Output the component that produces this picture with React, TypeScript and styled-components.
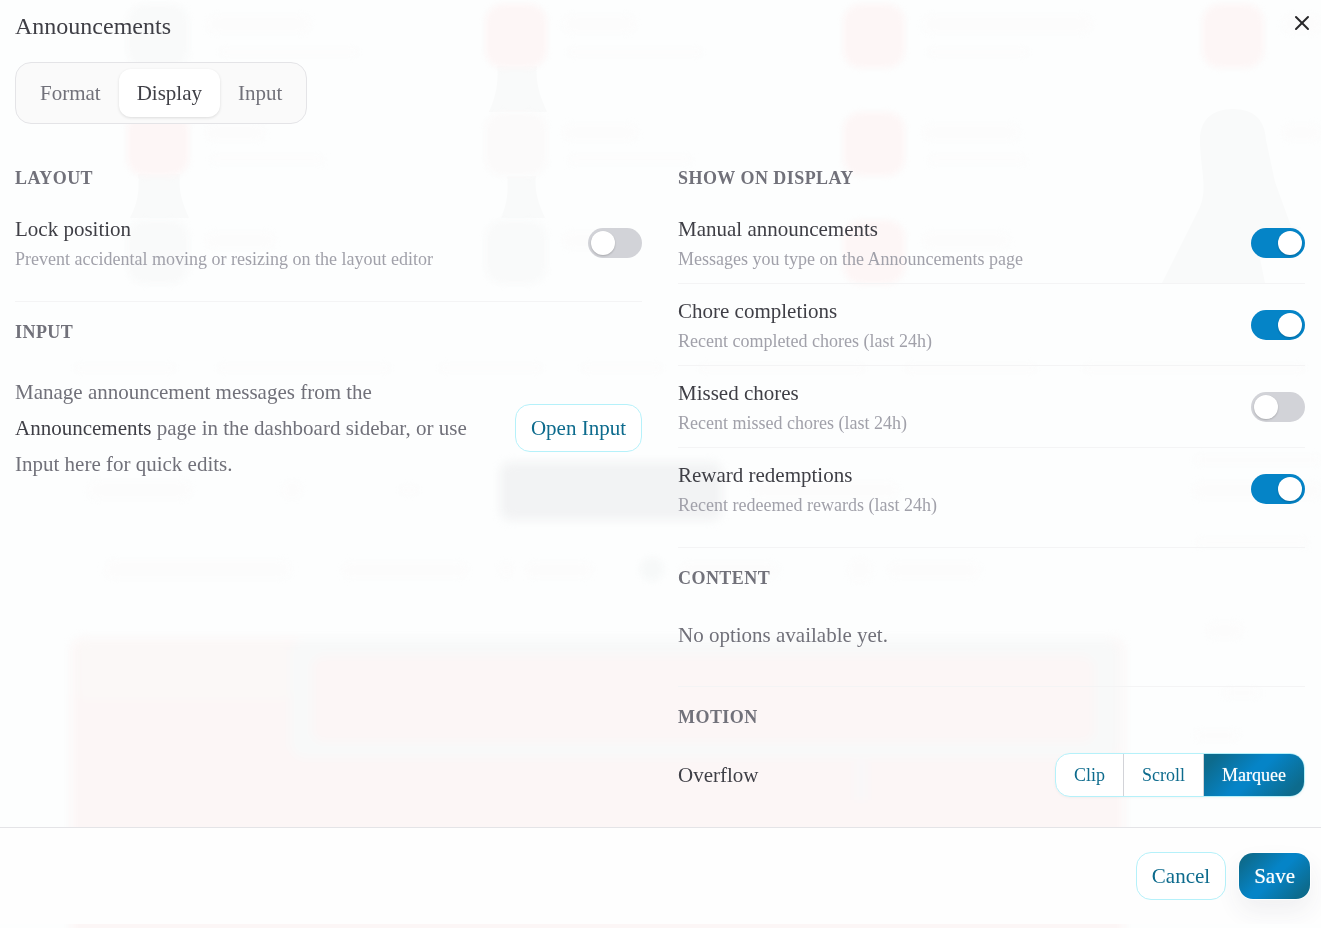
import React, { useState } from "react";
import styled, { createGlobalStyle, css } from "styled-components";
import { X } from "lucide-react";

const color = {
  page: "#fdfefe",
  ink: "#3f3f46",
  muted: "#71717a",
  faint: "#a1a1aa",
  line: "#f4f4f5",
  edge: "#e4e4e7",
  off: "#d2d3d8",
  accent: "#0584c7",
  accentDark: "#0d6b8d",
  accentLine: "#b5f1fa",
};

const accentFill = `linear-gradient(135deg, ${color.accentDark} 10%, ${color.accent} 45%, ${color.accent} 52%, ${color.accentDark} 88%)`;

const GlobalStyle = createGlobalStyle`
  * { box-sizing: border-box; }
  body {
    margin: 0;
    background: ${color.page};
    color: ${color.ink};
    font-family: "Liberation Serif", "Times New Roman", serif;
    font-size: 21px;
    line-height: 32px;
  }
  button, input { font: inherit; margin: 0; }
  h1, h2, p { margin: 0; }
`;

const Dialog = styled.main`
  position: relative;
  z-index: 1;
`;

const Header = styled.header`
  padding: 8px 7px 24px 15px;
`;

const TitleRow = styled.div`
  display: flex;
  justify-content: space-between;
  align-items: flex-start;
  margin-bottom: 18px;
`;

const Title = styled.h1`
  font-size: 24px;
  line-height: 36px;
  font-weight: 400;
`;

const CloseButton = styled.button`
  display: grid;
  place-items: center;
  width: 24px;
  height: 30px;
  padding: 0;
  border: 0;
  background: none;
  color: #27272a;
  cursor: pointer;
`;

const TabList = styled.div`
  display: inline-flex;
  vertical-align: top;
  padding: 6px;
  border: 1px solid ${color.edge};
  border-radius: 16px;
  background: #fafafa;
`;

const Tab = styled.button<{ $active: boolean }>`
  height: 48px;
  padding: 0 18px;
  border: 0;
  border-radius: 12px;
  background: none;
  color: ${color.muted};
  cursor: pointer;
  ${(p) =>
    p.$active &&
    css`
      background: #fff;
      color: ${color.ink};
      box-shadow: 0 1px 3px rgba(0, 0, 0, 0.12);
    `}
`;

const Columns = styled.div`
  display: grid;
  grid-template-columns: repeat(2, minmax(0, 1fr));
  gap: 36px;
  padding: 0 16px 0 15px;
`;

const Section = styled.section`
  padding: 18px 0;
  & + & {
    border-top: 1px solid ${color.line};
  }
`;

const Heading = styled.h2`
  margin-bottom: 12px;
  color: ${color.muted};
  font-size: 18px;
  line-height: 24px;
  font-weight: 700;
  letter-spacing: 0.025em;
  text-transform: uppercase;
`;

const SettingRow = styled.div`
  display: flex;
  justify-content: space-between;
  align-items: center;
  gap: 18px;
  padding: 11px 0 10px;
  & + & {
    border-top: 1px solid ${color.line};
  }
`;

const SettingLabel = styled.label`
  display: block;
`;

const SettingHint = styled.p`
  color: ${color.faint};
  font-size: 18px;
  line-height: 28px;
`;

const Switch = styled.input`
  appearance: none;
  flex: none;
  width: 54px;
  height: 30px;
  padding: 3px;
  border-radius: 15px;
  background: ${color.off};
  cursor: pointer;
  &::before {
    content: "";
    display: block;
    width: 24px;
    height: 24px;
    border-radius: 50%;
    background: #fff;
    box-shadow: 0 1px 2px rgba(0, 0, 0, 0.2);
  }
  &:checked {
    background: ${color.accent};
  }
  &:checked::before {
    margin-left: auto;
  }
`;

const NoteRow = styled.div`
  display: flex;
  justify-content: space-between;
  align-items: center;
  gap: 18px;
  padding: 18px 0;
`;

const Note = styled.p`
  color: ${color.muted};
  line-height: 36px;
`;

const EmptyNote = styled(Note)`
  padding: 15px 0;
`;

const PageName = styled.span`
  color: ${color.ink};
`;

const Button = styled.button<{ $primary?: boolean }>`
  flex: none;
  height: 48px;
  padding: 0 15px;
  border: 1px solid ${color.accentLine};
  border-radius: 15px;
  background: #fff;
  color: ${color.accentDark};
  cursor: pointer;
  ${(p) =>
    p.$primary &&
    css`
      border-color: transparent;
      background: ${accentFill} padding-box;
      color: #fff;
      font-weight: 500;
      text-shadow: 0 0 1px rgba(255, 255, 255, 0.6);
      box-shadow: 0 12px 24px rgba(63, 63, 90, 0.07);
    `}
`;

const ControlRow = styled.div`
  display: flex;
  justify-content: space-between;
  align-items: center;
  padding: 12px 0;
`;

const Segmented = styled.div`
  display: flex;
  overflow: hidden;
  border: 1px solid ${color.accentLine};
  border-radius: 15px;
  background: #fff;
  box-shadow: 0 1px 3px rgba(0, 0, 0, 0.04);
`;

const Segment = styled.label`
  height: 42px;
  padding: 0 18px;
  color: ${color.accentDark};
  font-size: 18px;
  line-height: 42px;
  cursor: pointer;
  & + & {
    border-left: 1px solid ${color.off};
  }
  &:has(:checked) {
    background: ${accentFill};
    color: #fff;
    font-weight: 500;
    text-shadow: 0 0 1px rgba(255, 255, 255, 0.6);
  }
`;

const HiddenRadio = styled.input`
  position: absolute;
  opacity: 0;
  width: 1px;
  height: 1px;
`;

const Footer = styled.footer`
  display: flex;
  justify-content: flex-end;
  gap: 12px;
  padding: 24px 10px;
  border-top: 1px solid ${color.edge};
  background: #fefefe;
`;

const BackdropSvg = styled.svg`
  position: fixed;
  inset: 0;
  width: 100%;
  height: 100%;
`;

const PINK = "#fdf6f6";
const GRAY = "#f9fafa";
const SMUDGE = "#fcfcfc";

const tiles: [number, number, string][] = [
  [127, 4, GRAY],
  [485, 4, PINK],
  [843, 4, PINK],
  [1202, 4, PINK],
  [127, 112, PINK],
  [485, 112, "#fbfafa"],
  [843, 112, PINK],
  [127, 220, GRAY],
  [485, 220, GRAY],
  [843, 220, PINK],
];

const smudges: [number, number, number, number][] = [
  [207, 15, 104, 18],
  [220, 48, 138, 8],
  [562, 15, 74, 18],
  [568, 48, 134, 8],
  [922, 15, 170, 18],
  [928, 48, 100, 8],
  [1282, 15, 39, 18],
  [205, 124, 60, 17],
  [210, 155, 114, 9],
  [562, 124, 76, 17],
  [568, 155, 124, 9],
  [922, 124, 98, 17],
  [928, 155, 98, 9],
  [1282, 124, 39, 17],
  [205, 232, 70, 17],
  [562, 232, 60, 17],
  [922, 232, 88, 17],
  [75, 364, 100, 8],
  [218, 364, 172, 8],
  [440, 364, 102, 8],
  [582, 364, 80, 8],
  [700, 364, 164, 8],
  [906, 364, 130, 8],
  [1084, 364, 220, 8],
  [88, 481, 104, 18],
  [282, 481, 20, 18],
  [400, 486, 18, 8],
  [752, 482, 146, 16],
  [105, 560, 186, 19],
  [342, 562, 125, 16],
  [500, 562, 12, 16],
  [526, 562, 66, 16],
  [680, 562, 98, 16],
  [848, 558, 24, 24],
  [888, 562, 92, 16],
  [1195, 455, 126, 10],
  [1192, 482, 129, 17],
  [1196, 538, 112, 9],
  [1206, 622, 37, 17],
  [1224, 688, 36, 10],
  [1195, 730, 44, 11],
];

/* Dashboard seen faintly through the frosted dialog surface. */
function Backdrop() {
  return (
    <BackdropSvg aria-hidden="true">
      <defs>
        <filter id="soft" x="-20%" y="-20%" width="140%" height="140%" colorInterpolationFilters="sRGB">
          <feGaussianBlur stdDeviation="3" />
        </filter>
        <filter id="softer" x="-20%" y="-40%" width="140%" height="180%" colorInterpolationFilters="sRGB">
          <feGaussianBlur stdDeviation="5" />
        </filter>
      </defs>
      <g fill={GRAY}>
        <path d="M138 174h42c-2 18 3 30 9 44h-59c7-14 10-26 8-44z" />
        <path d="M497 66h40c-2 18 4 32 10 46h-58c6-14 10-28 8-46z" />
        <path d="M507 176h29c-2 18 4 30 9 42h-44c5-12 8-24 6-42z" />
        <path d="M1200 140c0-20 12-31 33-31s32 11 33 31l9 42 16 44 11 2-47 6 10 49h-103l38-76c8-20 0-40 0-67z" />
      </g>
      <g filter="url(#soft)">
        {tiles.map(([x, y, fill]) => (
          <rect key={`${x}-${y}`} x={x} y={y} width="62" height="64" rx="18" fill={fill} />
        ))}
      </g>
      <g filter="url(#soft)" fill={SMUDGE}>
        {smudges.map(([x, y, w, h]) => (
          <rect key={`${x}-${y}`} x={x} y={y} width={w} height={h} rx={h / 2} />
        ))}
        <circle cx="652" cy="569" r="12" fill="#f7f9f9" />
      </g>
      <rect x="500" y="462" width="222" height="58" rx="10" fill="#f2f3f4" filter="url(#softer)" />
      <g filter="url(#softer)">
        <rect x="71" y="638" width="1053" height="330" rx="12" fill="#fcf6f6" />
        <rect x="76" y="640" width="214" height="60" rx="12" fill="#fbf8f7" />
        <rect x="290" y="638" width="830" height="120" rx="16" fill="#f8f9f9" />
        <rect x="312" y="656" width="782" height="86" rx="12" fill="#fcf6f6" />
        <rect x="854" y="762" width="14" height="38" fill="#f9f7f8" />
      </g>
    </BackdropSvg>
  );
}

const sources = [
  { id: "manual", name: "Manual announcements", hint: "Messages you type on the Announcements page", on: true },
  { id: "completed", name: "Chore completions", hint: "Recent completed chores (last 24h)", on: true },
  { id: "missed", name: "Missed chores", hint: "Recent missed chores (last 24h)", on: false },
  { id: "rewards", name: "Reward redemptions", hint: "Recent redeemed rewards (last 24h)", on: true },
];

type SettingProps = { id: string; name: string; hint: string; on: boolean };

function Setting({ id, name, hint, on }: SettingProps) {
  return (
    <SettingRow>
      <div>
        <SettingLabel htmlFor={id}>{name}</SettingLabel>
        <SettingHint id={`${id}-hint`}>{hint}</SettingHint>
      </div>
      <Switch type="checkbox" id={id} aria-describedby={`${id}-hint`} defaultChecked={on} />
    </SettingRow>
  );
}

export default function App() {
  const [tab, setTab] = useState("Display");
  const [overflow, setOverflow] = useState("Marquee");

  return (
    <>
      <GlobalStyle />
      <Backdrop />
      <Dialog>
        <Header>
          <TitleRow>
            <Title>Announcements</Title>
            <CloseButton type="button" aria-label="Close">
              <X size={24} strokeWidth={2} />
            </CloseButton>
          </TitleRow>
          <TabList role="tablist">
            {["Format", "Display", "Input"].map((name) => (
              <Tab
                key={name}
                type="button"
                role="tab"
                aria-selected={tab === name}
                $active={tab === name}
                onClick={() => setTab(name)}
              >
                {name}
              </Tab>
            ))}
          </TabList>
        </Header>

        <Columns>
          <div>
            <Section>
              <Heading>Layout</Heading>
              <Setting
                id="lock"
                name="Lock position"
                hint="Prevent accidental moving or resizing on the layout editor"
                on={false}
              />
            </Section>
            <Section>
              <Heading>Input</Heading>
              <NoteRow>
                <Note>
                  Manage announcement messages from the <PageName>Announcements</PageName> page in the
                  dashboard sidebar, or use Input here for quick edits.
                </Note>
                <Button type="button">Open Input</Button>
              </NoteRow>
            </Section>
          </div>

          <div>
            <Section>
              <Heading>Show on display</Heading>
              {sources.map((s) => (
                <Setting key={s.id} {...s} />
              ))}
            </Section>
            <Section>
              <Heading>Content</Heading>
              <EmptyNote>No options available yet.</EmptyNote>
            </Section>
            <Section>
              <Heading>Motion</Heading>
              <ControlRow>
                <span id="overflow-label">Overflow</span>
                <Segmented role="radiogroup" aria-labelledby="overflow-label">
                  {["Clip", "Scroll", "Marquee"].map((name) => (
                    <Segment key={name}>
                      <HiddenRadio
                        type="radio"
                        name="overflow"
                        checked={overflow === name}
                        onChange={() => setOverflow(name)}
                      />
                      {name}
                    </Segment>
                  ))}
                </Segmented>
              </ControlRow>
            </Section>
          </div>
        </Columns>

        <Footer>
          <Button type="button">Cancel</Button>
          <Button type="button" $primary>
            Save
          </Button>
        </Footer>
      </Dialog>
    </>
  );
}
